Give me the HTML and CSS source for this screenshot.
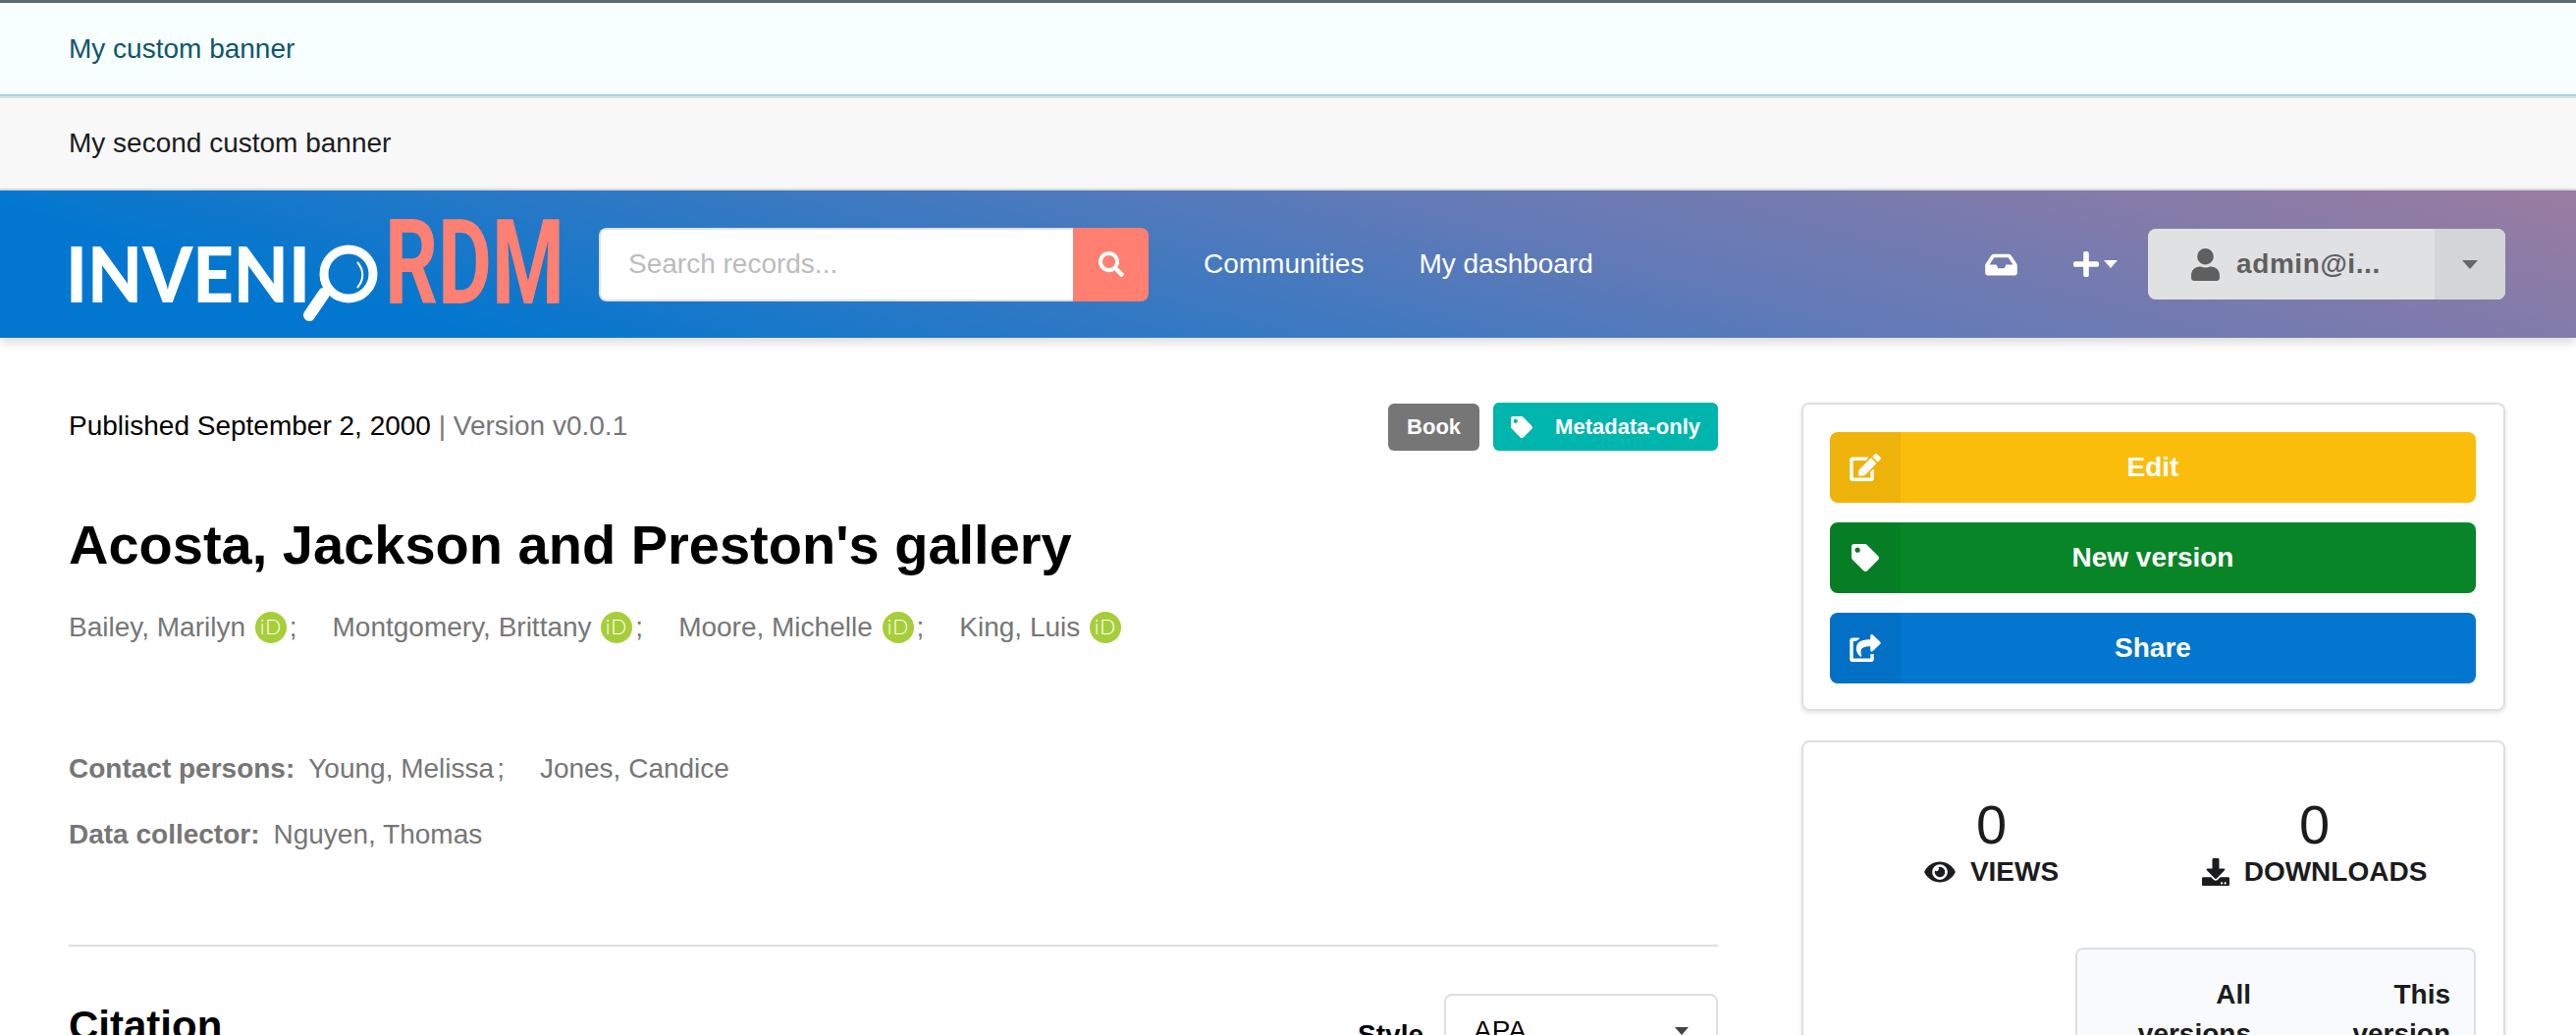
FILE: index.html
```html
<!DOCTYPE html>
<html>
    <head>
        <meta charset="UTF-8" />
        <title>Acosta, Jackson and Preston's gallery</title>
        <link rel="stylesheet" href="styles.css">
    </head>
    <body>
        <div class="banner banner-info">My custom banner</div>
        <div class="banner banner-plain">My second custom banner</div>

        <header class="topbar">
            <svg class="logo" width="516" height="144" viewBox="0 0 516 144">
                <text class="logo-invenio" x="3" y="111" textLength="249" lengthAdjust="spacingAndGlyphs">INVENI</text>
                <circle cx="291" cy="82" r="25" fill="none" stroke="#fff" stroke-width="9" />
                <path d="M300 70 C307 78 307 88 300 96" fill="none" stroke="#fff" stroke-width="2" />
                <path d="M266 102 L251 124" stroke="#fff" stroke-width="12" stroke-linecap="round" />
                <text class="logo-rdm" x="328" y="112" textLength="183" lengthAdjust="spacingAndGlyphs">RDM</text>
            </svg>

            <form class="search">
                <input class="search-input" type="text" placeholder="Search records..." />
                <button class="search-button" type="button">
                    <svg width="26" height="26" viewBox="0 0 512 512"><path fill="#fff" d="M505 442.7L405.3 343c-4.5-4.5-10.6-7-17-7H372c27.6-35.3 44-79.7 44-128C416 93.1 322.9 0 208 0S0 93.1 0 208s93.1 208 208 208c48.3 0 92.7-16.4 128-44v16.3c0 6.4 2.5 12.5 7 17l99.7 99.7c9.4 9.4 24.6 9.4 33.9 0l28.3-28.3c9.4-9.4 9.4-24.6.1-34zM208 336c-70.7 0-128-57.2-128-128 0-70.7 57.2-128 128-128 70.7 0 128 57.2 128 128 0 70.7-57.2 128-128 128z"/></svg>
                </button>
            </form>

            <nav class="nav">
                <a href="#">Communities</a>
                <a href="#">My dashboard</a>
            </nav>

            <div class="topbar-right">
                <svg class="inbox" width="33" height="29" viewBox="0 0 576 512"><path fill="#fff" d="M567.938 243.908L462.25 85.374A48.003 48.003 0 0 0 422.311 64H153.689a48 48 0 0 0-39.938 21.374L8.062 243.908A47.994 47.994 0 0 0 0 270.533V400c0 26.51 21.49 48 48 48h480c26.51 0 48-21.49 48-48V270.533a47.994 47.994 0 0 0-8.062-26.625zM162.252 128h251.497l85.333 128H376l-32 64H232l-32-64H76.918l85.334-128z"/></svg>
                <div class="plus">
                    <svg width="26" height="30" viewBox="0 0 448 512"><path fill="#fff" d="M416 208H272V64c0-17.67-14.33-32-32-32h-32c-17.67 0-32 14.33-32 32v144H32c-17.67 0-32 14.33-32 32v32c0 17.67 14.33 32 32 32h144v144c0 17.67 14.33 32 32 32h32c17.67 0 32-14.33 32-32V304h144c17.67 0 32-14.33 32-32v-32c0-17.67-14.33-32-32-32z"/></svg>
                    <span class="caret caret-white"></span>
                </div>
                <div class="user-button">
                    <div class="user-name">
                        <svg width="29" height="33" viewBox="0 0 448 512"><path fill="#5f5f5f" d="M224 256c70.7 0 128-57.3 128-128S294.7 0 224 0 96 57.3 96 128s57.3 128 128 128zm89.6 32h-16.7c-22.2 10.2-46.9 16-72.9 16s-50.6-5.8-72.9-16h-16.7C60.2 288 0 348.2 0 422.4V464c0 26.5 21.5 48 48 48h352c26.5 0 48-21.5 48-48v-41.6c0-74.2-60.2-134.4-134.4-134.4z"/></svg>
                        <span>admin@i...</span>
                    </div>
                    <div class="user-toggle"><span class="caret caret-dark"></span></div>
                </div>
            </div>
        </header>

        <main class="page">
            <section class="record">
                <div class="record-meta">
                    <div class="published">Published September 2, 2000 <span class="muted">| Version v0.0.1</span></div>
                    <div class="labels">
                        <span class="label label-grey">Book</span>
                        <span class="label label-teal">
                            <svg width="22" height="22" viewBox="0 0 512 512"><path fill="#fff" d="M0 252.118V48C0 21.49 21.49 0 48 0h204.118a48 48 0 0 1 33.941 14.059l211.882 211.882c18.745 18.745 18.745 49.137 0 67.882L293.823 497.941c-18.745 18.745-49.137 18.745-67.882 0L14.059 286.059A48 48 0 0 1 0 252.118zM112 64c-26.51 0-48 21.49-48 48s21.49 48 48 48 48-21.49 48-48-21.49-48-48-48z"/></svg>
                            Metadata-only
                        </span>
                    </div>
                </div>

                <h1 class="title">Acosta, Jackson and Preston's gallery</h1>

                <ul class="people creators">
                    <li>Bailey, Marilyn <svg class="orcid" width="32" height="32" viewBox="0 0 32 32"><circle cx="16" cy="16" r="16" fill="#a6ce39"/><text x="16" y="23" text-anchor="middle">iD</text></svg><span class="semi">;</span></li>
                    <li>Montgomery, Brittany <svg class="orcid" width="32" height="32" viewBox="0 0 32 32"><circle cx="16" cy="16" r="16" fill="#a6ce39"/><text x="16" y="23" text-anchor="middle">iD</text></svg><span class="semi">;</span></li>
                    <li>Moore, Michelle <svg class="orcid" width="32" height="32" viewBox="0 0 32 32"><circle cx="16" cy="16" r="16" fill="#a6ce39"/><text x="16" y="23" text-anchor="middle">iD</text></svg><span class="semi">;</span></li>
                    <li>King, Luis <svg class="orcid" width="32" height="32" viewBox="0 0 32 32"><circle cx="16" cy="16" r="16" fill="#a6ce39"/><text x="16" y="23" text-anchor="middle">iD</text></svg></li>
                </ul>

                <ul class="people contributors">
                    <li class="role">Contact persons:</li>
                    <li>Young, Melissa<span class="semi">;</span></li>
                    <li>Jones, Candice</li>
                </ul>
                <ul class="people collectors">
                    <li class="role">Data collector:</li>
                    <li>Nguyen, Thomas</li>
                </ul>

                <hr class="divider" />

                <div class="citation">
                    <h2 class="citation-title">Citation</h2>
                    <div class="citation-style">
                        <label>Style</label>
                        <div class="select">APA<span class="caret caret-small"></span></div>
                    </div>
                </div>
            </section>

            <aside class="sidebar">
                <div class="card">
                    <button class="action action-yellow" type="button">
                        <span class="action-icon"><svg width="32" height="28" viewBox="0 0 576 512"><path fill="#fff" d="M402.6 83.2l90.2 90.2c3.8 3.8 3.8 10 0 13.8L274.4 405.6l-92.8 10.3c-12.4 1.4-22.9-9.1-21.5-21.5l10.3-92.8L388.8 83.2c3.8-3.8 10-3.8 13.8 0zm162-22.9l-48.8-48.8c-15.2-15.2-39.9-15.2-55.2 0l-35.4 35.4c-3.8 3.8-3.8 10 0 13.8l90.2 90.2c3.8 3.8 10 3.8 13.8 0l35.4-35.4c15.2-15.3 15.2-40 0-55.2zM384 346.2V448H64V128h229.8c3.2 0 6.2-1.3 8.5-3.5l40-40c7.6-7.6 2.2-20.5-8.5-20.5H48C21.5 64 0 85.5 0 112v352c0 26.5 21.5 48 48 48h352c26.5 0 48-21.5 48-48V306.2c0-10.7-12.9-16-20.5-8.5l-40 40c-2.2 2.3-3.5 5.3-3.5 8.5z"/></svg></span>
                        <span class="action-text">Edit</span>
                    </button>
                    <button class="action action-green" type="button">
                        <span class="action-icon"><svg width="28" height="28" viewBox="0 0 512 512"><path fill="#fff" d="M0 252.118V48C0 21.49 21.49 0 48 0h204.118a48 48 0 0 1 33.941 14.059l211.882 211.882c18.745 18.745 18.745 49.137 0 67.882L293.823 497.941c-18.745 18.745-49.137 18.745-67.882 0L14.059 286.059A48 48 0 0 1 0 252.118zM112 64c-26.51 0-48 21.49-48 48s21.49 48 48 48 48-21.49 48-48-21.49-48-48-48z"/></svg></span>
                        <span class="action-text">New version</span>
                    </button>
                    <button class="action action-blue" type="button">
                        <span class="action-icon"><svg width="32" height="28" viewBox="0 0 576 512"><path fill="#fff" d="M568.482 177.448L424.479 313.433C409.3 327.768 384 317.14 384 295.985v-71.963c-144.575.97-205.566 35.113-164.775 171.353 4.483 14.973-12.846 26.567-25.006 17.33C155.252 383.105 120 326.488 120 269.339c0-143.937 117.599-172.5 264-173.312V24.012c0-21.174 25.317-31.768 40.479-17.448l144.003 135.988c10.02 9.463 10.028 25.425 0 34.896zM384 379.128V448H64V128h50.916a11.99 11.99 0 0 0 8.648-3.693c14.953-15.568 32.237-27.89 51.014-37.676C186.708 80.37 182.235 64 168.592 64H48C21.49 64 0 85.49 0 112v352c0 26.51 21.49 48 48 48h352c26.51 0 48-21.49 48-48v-88.806c0-8.288-8.197-14.066-16.011-11.302a71.83 71.83 0 0 1-34.189 3.377c-7.27-1.046-13.8 4.514-13.8 11.859z"/></svg></span>
                        <span class="action-text">Share</span>
                    </button>
                </div>

                <div class="card card-stats">
                    <div class="stats">
                        <div class="stat">
                            <div class="stat-value">0</div>
                            <div class="stat-label">
                                <svg width="32" height="28" viewBox="0 0 576 512"><path fill="#1b1c1d" d="M572.52 241.4C518.29 135.59 410.93 64 288 64S57.68 135.64 3.48 241.41a32.35 32.35 0 0 0 0 29.19C57.71 376.41 165.07 448 288 448s230.32-71.64 284.52-177.41a32.35 32.35 0 0 0 0-29.19zM288 400a144 144 0 1 1 144-144 143.93 143.93 0 0 1-144 144zm0-240a95.31 95.31 0 0 0-25.31 3.79 47.85 47.85 0 0 1-66.9 66.9A95.78 95.78 0 1 0 288 160z"/></svg>
                                VIEWS
                            </div>
                        </div>
                        <div class="stat">
                            <div class="stat-value">0</div>
                            <div class="stat-label">
                                <svg width="28" height="28" viewBox="0 0 512 512"><path fill="#1b1c1d" d="M216 0h80c13.3 0 24 10.7 24 24v168h87.7c17.8 0 26.7 21.5 14.1 34.1L269.7 378.3c-7.5 7.5-19.8 7.5-27.3 0L90.1 226.1c-12.6-12.6-3.7-34.1 14.1-34.1H192V24c0-13.3 10.7-24 24-24zm296 376v112c0 13.3-10.7 24-24 24H24c-13.3 0-24-10.7-24-24V376c0-13.3 10.7-24 24-24h146.7l49 49c20.1 20.1 52.5 20.1 72.6 0l49-49H488c13.3 0 24 10.7 24 24zm-124 88c0-11-9-20-20-20s-20 9-20 20 9 20 20 20 20-9 20-20zm64 0c0-11-9-20-20-20s-20 9-20 20 9 20 20 20 20-9 20-20z"/></svg>
                                DOWNLOADS
                            </div>
                        </div>
                    </div>
                    <table class="versions">
                        <tr>
                            <th class="versions-all">All<br />versions</th>
                            <th>This<br />version</th>
                        </tr>
                    </table>
                </div>
            </aside>
        </main>
    </body>
</html>
```

FILE: styles.css
```css
html, body {
    height: 100%;
    overflow: hidden;
}

body {
    margin: 0;
    font-family: "Liberation Sans", Arial, sans-serif;
    font-size: 28px;
    line-height: 40px;
    color: #000;
    background-color: #fff;
}

.banner {
    display: flex;
    align-items: center;
    padding-left: 70px;
}

.banner-info {
    height: 93px;
    border-top: 3px solid #5d6b73;
    border-bottom: 2px solid #a9d5de;
    background-color: #f8ffff;
    color: #0e566c;
}

.banner-plain {
    height: 92px;
    border-top: 2px solid #dedfe0;
    border-bottom: 2px solid #dedfe0;
    background-color: #f8f8f9;
    color: #1b1c1d;
}

/* Top bar */
.topbar {
    position: relative;
    display: flex;
    align-items: center;
    height: 150px;
    padding-left: 64px;
    background: linear-gradient(15deg, #0377cf 16%, #607ab8 60%, #9b7ca0 100%);
    box-shadow: 0 4px 10px rgba(0, 0, 0, 0.16);
}

.logo {
    flex: none;
    width: 516px;
    margin-right: 30px;
}

.logo-invenio {
    font-family: Lato, sans-serif;
    font-weight: 900;
    font-size: 78px;
    fill: #fff;
}

.logo-rdm {
    font-family: Roboto, sans-serif;
    font-weight: 700;
    font-size: 120px;
    fill: #fd8072;
}

.search {
    display: flex;
    height: 75px;
}

.search-input {
    box-sizing: border-box;
    width: 483px;
    height: 75px;
    padding: 0 28px;
    border: 2px solid #dedfe0;
    border-right: none;
    border-radius: 8px 0 0 8px;
    background-color: #fff;
    font-family: inherit;
    font-size: 28px;
}

.search-input::placeholder {
    color: #bcbcbc;
    opacity: 1;
}

.search-button {
    display: flex;
    align-items: center;
    justify-content: center;
    width: 77px;
    height: 75px;
    padding: 0;
    border: none;
    border-radius: 0 8px 8px 0;
    background-color: #ff7f70;
}

.nav {
    display: flex;
    gap: 56px;
    margin-left: 56px;
}

.nav a {
    color: #fff;
    text-decoration: none;
}

.topbar-right {
    display: flex;
    align-items: center;
    margin-left: auto;
    margin-right: 72px;
}

.inbox {
    margin-right: 57px;
}

.plus {
    display: flex;
    align-items: center;
    gap: 5px;
    margin-right: 31px;
}

.caret {
    display: inline-block;
    width: 0;
    height: 0;
    border-left: 7px solid transparent;
    border-right: 7px solid transparent;
    border-top: 8px solid #fff;
}

.caret-dark {
    border-left-width: 8px;
    border-right-width: 8px;
    border-top: 9px solid #666;
}

.caret-small {
    border-top-color: #444;
}

.user-button {
    display: flex;
    width: 364px;
    height: 72px;
    border-radius: 8px;
    background-color: #e0e1e2;
    overflow: hidden;
}

.user-name {
    display: flex;
    align-items: center;
    gap: 17px;
    width: 292px;
    box-sizing: border-box;
    padding-left: 44px;
    font-weight: 700;
    letter-spacing: 0.6px;
    color: #5f5f5f;
}

.user-toggle {
    display: flex;
    align-items: center;
    justify-content: center;
    flex: 1;
    background-color: #d4d5d7;
}

/* Page columns */
.page {
    display: grid;
    grid-template-columns: 1680px 717px;
    column-gap: 85px;
    padding: 66px 0 0 70px;
}

.record-meta {
    display: flex;
    justify-content: space-between;
    height: 49px;
}

.published {
    padding-top: 4px;
}

.muted {
    color: #767676;
}

.labels {
    display: flex;
    align-items: flex-start;
    gap: 14px;
}

.label {
    display: flex;
    align-items: center;
    height: 48px;
    padding: 0 19px;
    border-radius: 6px;
    font-size: 22px;
    font-weight: 700;
    line-height: 1;
    color: #fff;
}

.label-grey {
    margin-top: 1px;
    background-color: #767676;
}

.label-teal {
    gap: 23px;
    height: 49px;
    padding: 0 18px;
    background-color: #00b5ad;
}

.title {
    margin: 64px 0 32px;
    font-size: 56px;
    line-height: 64px;
    font-weight: 700;
}

.people {
    display: flex;
    margin: 0;
    padding: 0;
    list-style: none;
    color: #767676;
}

.people li {
    display: flex;
    align-items: center;
    white-space: pre;
}

.creators {
    gap: 36px;
}

.orcid {
    margin-left: 2px;
}

.orcid text {
    font-family: Lato, sans-serif;
    font-size: 21px;
    font-weight: 300;
    letter-spacing: 1px;
    fill: #fff;
}

.semi {
    margin-left: 3px;
}

.contributors {
    margin-top: 104px;
    gap: 36px;
}

.contributors .role {
    margin-right: -22px;
}

.collectors {
    margin-top: 27px;
    gap: 14px;
}

.role {
    font-weight: 700;
}

.divider {
    height: 2px;
    margin: 92px 0 48px;
    border: none;
    background-color: #dedfe0;
}

.citation {
    display: flex;
    justify-content: space-between;
}

.citation-title {
    margin: 8px 0 0;
    font-size: 42px;
    line-height: 50px;
}

.citation-style {
    display: flex;
    gap: 21px;
}

.citation-style label {
    margin-top: 22px;
    font-weight: 700;
}

.select {
    display: flex;
    align-items: center;
    justify-content: space-between;
    box-sizing: border-box;
    width: 279px;
    height: 76px;
    padding: 0 28px;
    border: 2px solid #dedfe0;
    border-radius: 8px;
}

/* Sidebar */
.sidebar {
    display: flex;
    flex-direction: column;
    gap: 30px;
}

.card {
    display: flex;
    flex-direction: column;
    gap: 20px;
    padding: 28px 28px 26px 27px;
    border: 2px solid #dedfe0;
    border-radius: 8px;
    box-shadow: 0 2px 4px rgba(34, 36, 38, 0.12);
}

.action {
    display: flex;
    align-items: stretch;
    height: 72px;
    padding: 0;
    border: none;
    border-radius: 8px;
    overflow: hidden;
    font-family: inherit;
    font-size: 28px;
    font-weight: 700;
    color: #fff;
}

.action-icon {
    display: flex;
    align-items: center;
    justify-content: center;
    flex: none;
    width: 72px;
    background-color: rgba(0, 0, 0, 0.05);
}

.action-text {
    flex: 1;
    align-self: center;
    padding-right: 72px;
}

.action-yellow {
    background-color: #fbbd0c;
}

.action-green {
    background-color: #078527;
}

.action-blue {
    background-color: #0376d0;
}

.card-stats {
    gap: 0;
    padding-top: 56px;
}

.stats {
    display: grid;
    grid-template-columns: 329px 329px;
}

.stat {
    text-align: center;
}

.stat-value {
    font-size: 56px;
    line-height: 56px;
    color: #1b1c1d;
}

.stat-label {
    display: flex;
    align-items: center;
    justify-content: center;
    gap: 15px;
    font-weight: 700;
    color: #1b1c1d;
}

.versions {
    align-self: flex-end;
    width: 408px;
    margin-top: 57px;
    border-collapse: separate;
    border-spacing: 0;
    border: 2px solid #dedfe0;
    border-bottom: none;
    border-radius: 8px 8px 0 0;
    background-color: #f9fafb;
    color: #1b1c1d;
}

.versions th {
    padding: 26px 24px 24px 0;
    text-align: right;
    font-weight: 700;
}

.versions-all {
    width: 177px;
}
```
